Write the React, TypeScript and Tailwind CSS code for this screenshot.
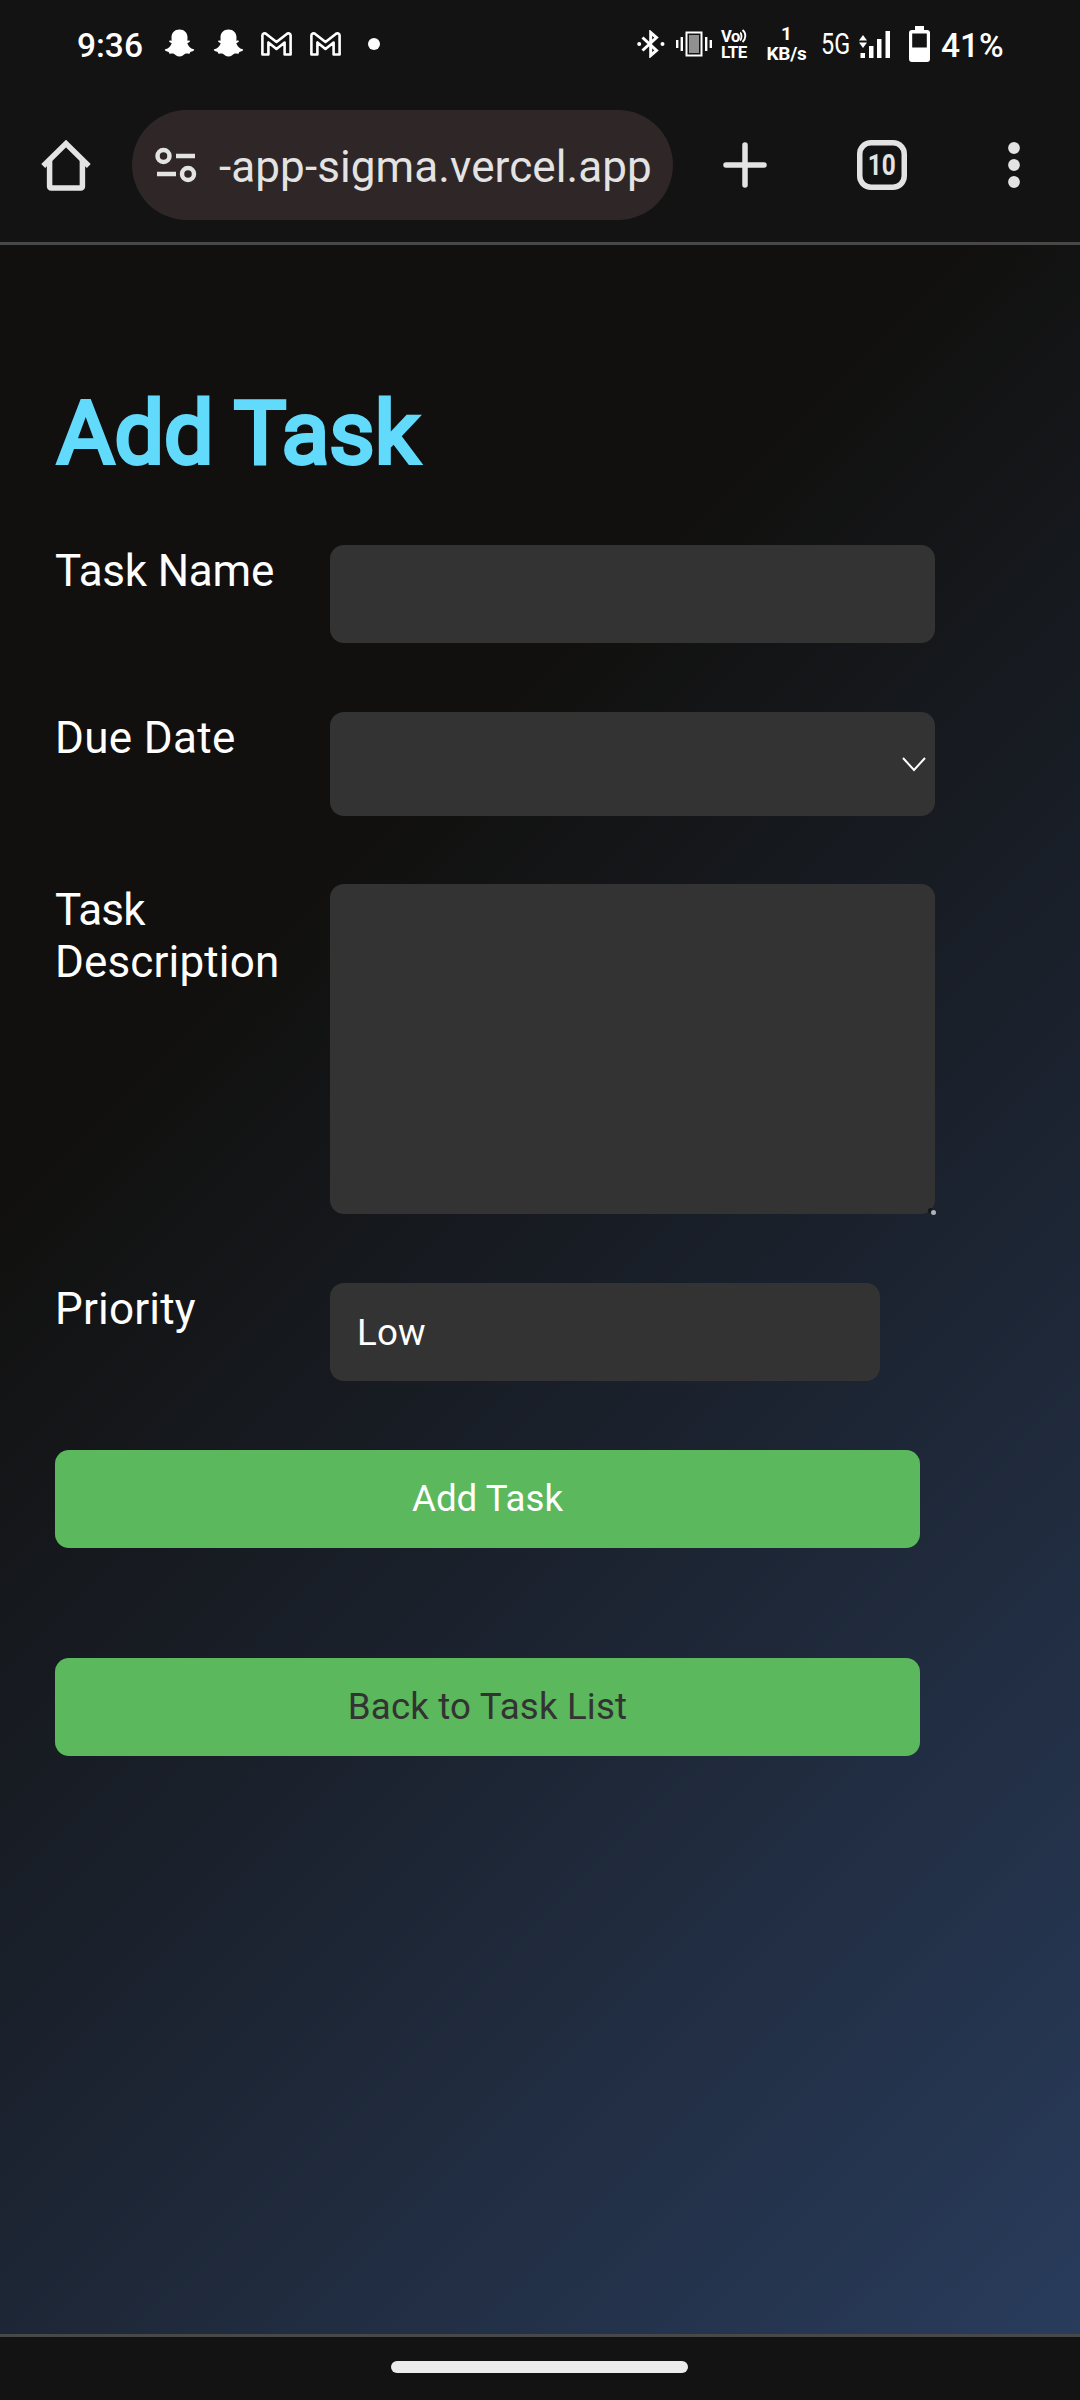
import type { ReactNode } from 'react';

function Ghost() {
  return (
    <svg className="h-[30px] w-[31px] shrink-0" viewBox="0 0 31 30" fill="#fff">
      <path d="M15.500.500c4.900 0 7.800 3.300 8 7.500l-.1 3.700c.8.100 1.700-.5 2.300 0 .6.700-.3 1.500-2.400 2.500.9 3 3 5.200 6.400 6.100.8.300.6 1-.2 1.500-1 .6-2.500.8-3.200 1.200-.4.600-.3 1.500-1 1.700-1.200.2-2.700-.5-4 0-1.700.8-3 2.700-5.800 2.700s-4.100-1.900-5.800-2.700c-1.300-.5-2.800.2-4 0-.7-.2-.6-1.100-1-1.700-.7-.4-2.200-.6-3.200-1.200-.8-.5-1-1.200-.2-1.500 3.400-.9 5.500-3.100 6.400-6.100-2.100-1-3-1.800-2.400-2.500.6-.5 1.500.1 2.300 0L7.500 8c.2-4.200 3.100-7.500 8-7.500z" />
    </svg>
  );
}

function Mail() {
  return (
    <svg className="h-6 w-[31px] shrink-0" viewBox="0 0 31 24" fill="none" stroke="#fff" strokeWidth="2.600" strokeLinejoin="round">
      <path d="M1.400 22.500V3.500C1.400 1.500 3.600.7 5.200 1.900L15.500 10 25.800 1.900c1.600-1.200 3.800-.4 3.800 1.600v19h-6V10.500L15.500 17 7.400 10.500v12z" />
    </svg>
  );
}

function Row({ label, children, className }: { label: ReactNode; children: ReactNode; className: string }) {
  return (
    <div className={`flex items-start ${className}`}>
      <label className="w-[275px] shrink-0 text-[44px] leading-[52px] text-white">{label}</label>
      {children}
    </div>
  );
}

export default function App() {
  return (
    <div className="flex h-[2400px] w-[1080px] flex-col overflow-hidden bg-[#131313] font-['Roboto',sans-serif]">
      <div className="flex h-[88px] shrink-0 items-center justify-between pr-[76px] pl-[77px] text-white">
        <div className="flex items-center">
          <span className="w-[87px] pt-[3px] text-[33.500px] leading-none font-medium">9:36</span>
          <Ghost />
          <div className="w-[18px]" />
          <Ghost />
          <div className="w-[17px]" />
          <Mail />
          <div className="w-[18px]" />
          <Mail />
          <div className="ml-[27px] size-3 rounded-full bg-white" />
        </div>
        <div className="flex items-center">
          <svg className="h-7 w-7 shrink-0" viewBox="0 0 28 28" fill="none" stroke="#fff" strokeWidth="3">
            <path d="M5.500 7.500 19.500 20.500 13.700 25.500V2.500l5.800 5L5.500 20.500" />
            <circle cx="2.200" cy="14" r="2" fill="#fff" stroke="none" />
            <circle cx="25.500" cy="14" r="2" fill="#fff" stroke="none" />
          </svg>
          <svg className="ml-[11px] h-7 w-9 shrink-0" viewBox="0 0 36 28" fill="none" stroke="#fff" strokeWidth="2">
            <path d="M1.200 10v8M5.800 7v14M30.200 7v14M34.800 10v8" strokeWidth="2.400" />
            <rect x="10.500" y="2.500" width="15" height="23" />
            <rect x="13" y="5" width="10" height="18" fill="#909090" stroke="none" />
          </svg>
          <div className="ml-[9px] flex w-[28px] flex-col gap-[2px]">
            <div className="flex h-[13px] items-center">
              <span className="h-[13px] w-[19px] text-[16.500px] leading-[13px] font-bold tracking-[-0.5px]">Vo</span>
              <svg className="h-[14px] w-2 shrink-0" viewBox="0 0 8 14" fill="none" stroke="#fff" strokeWidth="1.900">
                <path d="M0 3.500c2 1.500 2 6 0 8M2.500 1c4 3 3.500 9 0 12" />
              </svg>
            </div>
            <span className="h-[14px] text-[17px] leading-[14px] font-bold tracking-[-0.5px]">LTE</span>
          </div>
          <div className="ml-[17px] flex w-[41px] flex-col items-center">
            <span className="text-[19px] leading-[19px] font-bold">1</span>
            <span className="text-[19px] leading-[21px] font-bold tracking-[-0.3px]">KB/s</span>
          </div>
          <span className="ml-[14px] w-[29px] origin-left scale-x-[0.78] text-[30px] leading-none">5G</span>
          <svg className="ml-[9px] h-[29px] w-8 shrink-0" viewBox="0 0 32 29" fill="#fff">
            <path d="M0 10.500 4 5l4 5.500zM0 12.500h8L4 18zM1.500 23h4.500v5H1.500zM10 16h4.500v12H10zM18 9h4.500v19H18zM26.500 1H31v27h-4.500z" />
          </svg>
          <svg className="ml-[18px] h-9 w-[21px] shrink-0" viewBox="0 0 21 36">
            <path fill="#fff" fillRule="evenodd" d="M6 0h9v4h3a3 3 0 0 1 3 3v26a3 3 0 0 1-3 3H3a3 3 0 0 1-3-3V7a3 3 0 0 1 3-3h3zM3.200 7.500v14h14.600v-14z" />
          </svg>
          <span className="ml-[11px] w-[63px] pt-[3px] text-[33.500px] leading-none font-medium">41%</span>
        </div>
      </div>

      <div className="flex h-[154px] shrink-0 items-center pl-[41px]">
        <svg className="h-[52px] w-[50px] shrink-0" viewBox="0 0 50 52" fill="none" stroke="#e3e3e3" strokeWidth="5.500">
          <path d="M2.200 27 25 4.500 47.800 27" />
          <path d="M8.600 21v26.500a1.500 1.500 0 0 0 1.500 1.500h29.800a1.500 1.500 0 0 0 1.500-1.500V21" />
        </svg>
        <div className="ml-[41px] flex h-[110px] w-[541px] shrink-0 items-center rounded-full bg-[#2f2627] pl-[23px]">
          <svg className="h-9 w-[42px] shrink-0" viewBox="0 0 42 36" fill="none" stroke="#e3e3e3" strokeWidth="4.500">
            <circle cx="8.500" cy="9" r="6" />
            <path d="M21 9h19M2 27h19" />
            <circle cx="33" cy="27" r="6" />
          </svg>
          <span className="ml-[22px] pt-[3px] text-[44px] leading-[52px] tracking-[0.1px] whitespace-nowrap text-[#e3e3e3]">-app-sigma.vercel.app</span>
        </div>
        <svg className="ml-[50px] h-[46px] w-11 shrink-0" viewBox="0 0 44 46" fill="none" stroke="#e3e3e3" strokeWidth="5.500" strokeLinecap="round">
          <path d="M22 3v40M3 23h38" />
        </svg>
        <div className="ml-[90px] flex h-[50px] w-[50px] shrink-0 items-center justify-center rounded-[14px] text-[29px] leading-none font-bold text-[#e3e3e3] shadow-[inset_0_0_0_5.500px_#e3e3e3]">
          <span className="scale-x-[0.84]">10</span>
        </div>
        <svg className="ml-[101px] h-[46px] w-3 shrink-0" viewBox="0 0 12 46" fill="#e3e3e3">
          <circle cx="6" cy="6" r="5.900" />
          <circle cx="6" cy="23" r="5.900" />
          <circle cx="6" cy="40" r="5.900" />
        </svg>
      </div>

      <main className="flex h-[2095px] shrink-0 flex-col border-y-[3px] border-[#484848] bg-[linear-gradient(135deg,#11100e_0%,#11100e_30%,#293c5c_100%)] px-[55px]">
        <h1 className="mt-[133px] h-[110px] pl-[2px] text-[88px] leading-[110px] font-normal text-[#61dafb] [-webkit-text-stroke:4px_#61dafb]">Add Task</h1>
        <Row label={<span className="tracking-[-0.2px]">Task Name</span>} className="mt-[57px] h-[98px]">
          <input className="h-[98px] w-[605px] rounded-[14px] bg-[#333] px-[27px] text-[36.700px] text-white outline-none" />
        </Row>
        <Row label={<span className="tracking-[0.35px]">Due Date</span>} className="mt-[69px] h-[104px]">
          <div className="flex h-[104px] w-[605px] items-center justify-end rounded-[14px] bg-[#333] pr-[9px]">
            <svg className="h-4 w-6" viewBox="0 0 24 16" fill="none" stroke="#fff" strokeWidth="2">
              <path d="M1 2l11 12L23 2" />
            </svg>
          </div>
        </Row>
        <Row
          label={
            <>
              <span className="tracking-[-0.7px]">Task</span> <span className="tracking-[0.15px]">Description</span>
            </>
          }
          className="mt-[68px] h-[330px]"
        >
          <div className="relative h-[330px] w-[605px] rounded-[14px] bg-[#333]">
            <span className="absolute right-[2px] bottom-[1px] size-[5px] rounded-full bg-[#151617]" />
            <span className="absolute -right-px -bottom-px size-[5px] rounded-full bg-[#adb3ba]" />
          </div>
        </Row>
        <Row label={<span className="tracking-[0.2px]">Priority</span>} className="mt-[69px] h-[98px]">
          <div className="flex h-[98px] w-[550px] items-center rounded-[14px] bg-[#333] pt-[2px] pl-[27px] text-[36.700px] tracking-[0.2px] text-white">Low</div>
        </Row>
        <button className="mt-[69px] h-[98px] w-[865px] shrink-0 rounded-[14px] bg-[#5cb85c] text-[36.700px] text-white">Add Task</button>
        <button className="mt-[110px] h-[98px] w-[865px] shrink-0 rounded-[14px] bg-[#5cb85c] text-[36.700px] tracking-[0.15px] text-[#333]">Back to Task List</button>
      </main>

      <div className="flex h-[63px] shrink-0 justify-center pt-[24px] pr-[2px]">
        <div className="h-3 w-[297px] rounded-full bg-[#ececec]" />
      </div>
    </div>
  );
}
